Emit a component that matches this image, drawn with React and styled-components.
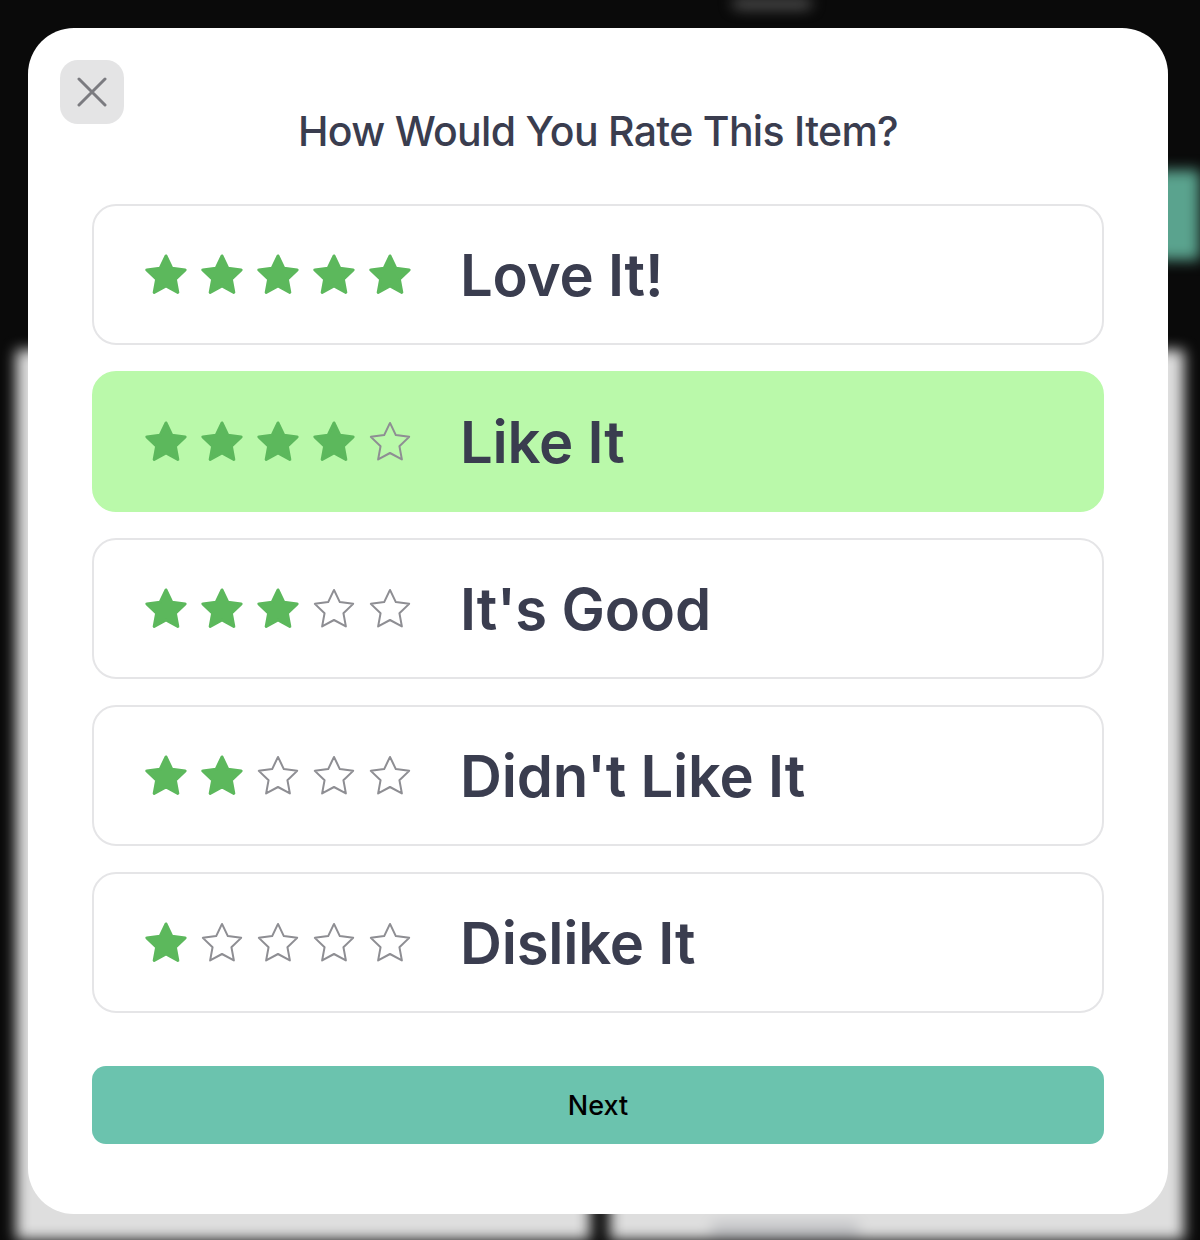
import React, { useState } from "react";
import styled, { createGlobalStyle } from "styled-components";

const GlobalStyle = createGlobalStyle`
  html, body {
    margin: 0;
    padding: 0;
    background: #0a0a0a;
    font-family: Inter, "Noto Sans", "Liberation Sans", sans-serif;
  }
  * { box-sizing: border-box; }
`;

// blurred page that sits behind the sheet
const Backdrop = styled.div`
  width: 1200px;
  height: 1240px;
  overflow: hidden;
  display: flex;
  flex-direction: column;
  filter: blur(7px);
`;

const BackHeader = styled.div`
  height: 350px;
  display: flex;
  justify-content: space-between;
  align-items: flex-start;
  padding-top: 170px;
`;

const BackGlow = styled.div`
  width: 80px;
  height: 14px;
  border-radius: 10px;
  background: #6a6a6a;
  margin: -176px 0 0 732px;
`;

const BackPill = styled.div`
  width: 110px;
  height: 90px;
  border-radius: 14px;
  background: #5aa38e;
  margin-right: -60px;
`;

const BackBody = styled.div`
  flex: 1;
  display: grid;
  grid-template-columns: 1fr 1fr;
  gap: 20px;
  padding: 0 16px;
`;

const BackCard = styled.div`
  background: #dedede;
  display: flex;
  align-items: flex-end;
  padding-left: 100px;
`;

const BackText = styled.div`
  width: 150px;
  height: 16px;
  border-radius: 8px;
  background: #c2c3c6;
  margin-bottom: 2px;
`;

const Overlay = styled.div`
  position: fixed;
  inset: 0;
  padding: 28px 32px 26px 28px;
  display: flex;
`;

const Sheet = styled.div`
  flex: 1;
  background: #ffffff;
  border-radius: 46px;
  padding: 32px;
  display: flex;
  flex-direction: column;
`;

const Header = styled.div`
  display: grid;
  grid-template-columns: 64px 1fr 64px;
  align-items: start;
`;

const CloseButton = styled.button`
  width: 64px;
  height: 64px;
  border: none;
  border-radius: 18px;
  background: #e4e4e5;
  display: flex;
  align-items: center;
  justify-content: center;
  padding: 0;
  cursor: pointer;
`;

const Title = styled.h2`
  margin: 0;
  padding-top: 47px;
  text-align: center;
  font-size: 41px;
  line-height: 49px;
  font-weight: 550;
  letter-spacing: -0.7px;
  color: #3a3d4f;
`;

const Options = styled.div`
  display: flex;
  flex-direction: column;
  gap: 26px;
  padding: 0 32px;
  margin-top: 48px;
`;

const Option = styled.button`
  height: 141px;
  display: flex;
  align-items: center;
  gap: 48px;
  padding: 0 50px;
  border-radius: 24px;
  border: 2px solid ${(p) => (p.$active ? "#baf9aa" : "#e5e5e7")};
  background: ${(p) => (p.$active ? "#baf9aa" : "#ffffff")};
  font-family: inherit;
  cursor: pointer;
  text-align: left;
`;

const Stars = styled.div`
  display: flex;
  gap: 12px;
`;

const Label = styled.span`
  font-size: 58px;
  font-weight: 600;
  letter-spacing: -0.2px;
  color: #3a3d4f;
  line-height: 1;
`;

const NextButton = styled.button`
  margin: 53px 32px 0;
  height: 78px;
  border: none;
  border-radius: 14px;
  background: #6bc3ae;
  color: #000000;
  font-family: inherit;
  font-size: 27px;
  font-weight: 500;
  cursor: pointer;
`;

const STAR =
  "12,1.6 15.18,8.23 22.46,9.2 17.14,14.27 18.47,21.5 12,18 5.53,21.5 6.86,14.27 1.54,9.2 8.82,8.23";

function Star({ filled }) {
  return (
    <svg width="44" height="44" viewBox="0 0 24 24">
      {filled ? (
        <polygon points={STAR} fill="#5cb85c" stroke="#5cb85c" strokeWidth="1.6" strokeLinejoin="round" />
      ) : (
        <polygon points={STAR} fill="none" stroke="#8e8e93" strokeWidth="1.1" strokeLinejoin="round" />
      )}
    </svg>
  );
}

const ratings = [
  { stars: 5, label: "Love It!" },
  { stars: 4, label: "Like It" },
  { stars: 3, label: "It's Good" },
  { stars: 2, label: "Didn't Like It" },
  { stars: 1, label: "Dislike It" },
];

export default function App() {
  const [selected, setSelected] = useState(4);

  return (
    <>
      <GlobalStyle />
      <Backdrop>
        <BackHeader>
          <BackGlow />
          <BackPill />
        </BackHeader>
        <BackBody>
          <BackCard />
          <BackCard>
            <BackText />
          </BackCard>
        </BackBody>
      </Backdrop>
      <Overlay>
        <Sheet>
          <Header>
            <CloseButton aria-label="Close">
              <svg width="30" height="30" viewBox="0 0 30 30">
                <path d="M2 2 L28 28 M28 2 L2 28" stroke="#7b7b80" strokeWidth="3" strokeLinecap="round" />
              </svg>
            </CloseButton>
            <Title>How Would You Rate This Item?</Title>
          </Header>
          <Options>
            {ratings.map((r) => (
              <Option key={r.stars} $active={selected === r.stars} onClick={() => setSelected(r.stars)}>
                <Stars>
                  {[1, 2, 3, 4, 5].map((i) => (
                    <Star key={i} filled={i <= r.stars} />
                  ))}
                </Stars>
                <Label>{r.label}</Label>
              </Option>
            ))}
          </Options>
          <NextButton>Next</NextButton>
        </Sheet>
      </Overlay>
    </>
  );
}
